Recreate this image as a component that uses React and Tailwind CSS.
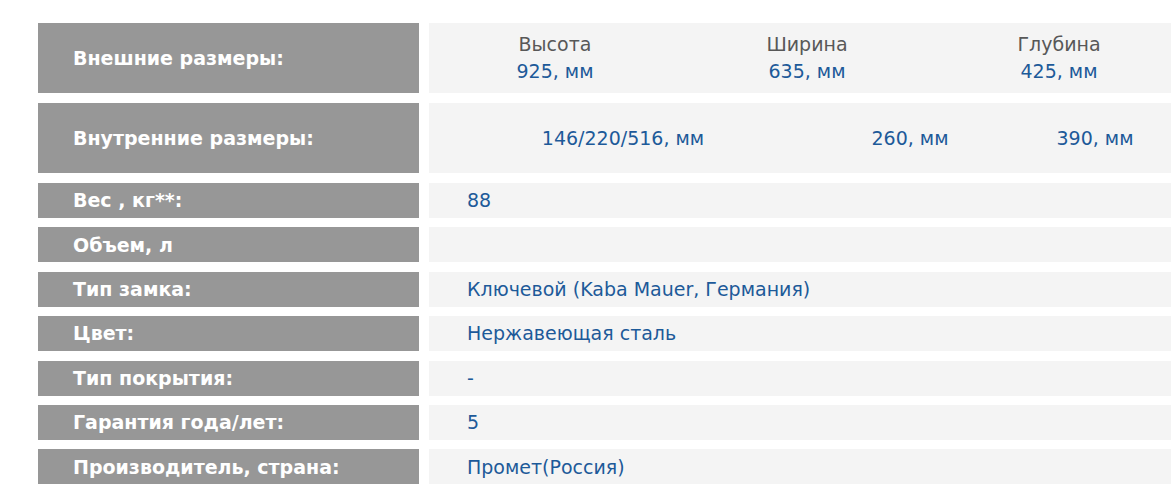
const rows = [
  { label: "Вес , кг**:", value: "88" },
  { label: "Объем, л", value: "" },
  { label: "Тип замка:", value: "Ключевой (Kaba Mauer, Германия)" },
  { label: "Цвет:", value: "Нержавеющая сталь" },
  { label: "Тип покрытия:", value: "-" },
  { label: "Гарантия года/лет:", value: "5" },
  { label: "Производитель, страна:", value: "Промет(Россия)" },
];

function Label({ children, tall }) {
  return (
    <div
      className={`w-[381px] shrink-0 bg-[#979797] text-white font-bold text-[19px] pl-[35px] flex items-center ${
        tall ? "h-[70px]" : "h-[35px]"
      }`}
    >
      {children}
    </div>
  );
}

export default function App() {
  return (
    <div
      className="w-[1171px] h-[500px] bg-white overflow-hidden pt-[23px] pl-[38px]"
      style={{ fontFamily: '"DejaVu Sans", Verdana, sans-serif' }}
    >
      <div className="flex flex-col">
        {/* outer dimensions */}
        <div className="flex">
          <Label tall>Внешние размеры:</Label>
          <div className="ml-[10px] h-[70px] w-[760px] shrink-0 bg-[#f4f4f4] grid grid-cols-[252px_252px_252px] items-center text-[19px] leading-[27px]">
            {[
              ["Высота", "925, мм"],
              ["Ширина", "635, мм"],
              ["Глубина", "425, мм"],
            ].map(([h, v]) => (
              <div key={h} className="flex flex-col items-center">
                <span className="text-[#585858]">{h}</span>
                <span className="text-[#1d5a99]">{v}</span>
              </div>
            ))}
          </div>
        </div>

        {/* inner dimensions */}
        <div className="flex mt-[10px]">
          <Label tall>Внутренние размеры:</Label>
          <div className="ml-[10px] h-[70px] w-[760px] shrink-0 bg-[#f4f4f4] grid grid-cols-[388px_186px_184px] items-center text-[19px] text-[#1d5a99]">
            <span className="text-center">146/220/516, мм</span>
            <span className="text-center">260, мм</span>
            <span className="text-center">390, мм</span>
          </div>
        </div>

        <div className="flex flex-col gap-[9.4px] mt-[10px]">
          {rows.map((r) => (
            <div key={r.label} className="flex">
              <Label>{r.label}</Label>
              <div className="ml-[10px] h-[35px] w-[760px] shrink-0 bg-[#f4f4f4] flex items-center pl-[38px] text-[19px] text-[#1d5a99]">
                {r.value}
              </div>
            </div>
          ))}
        </div>
      </div>
    </div>
  );
}
